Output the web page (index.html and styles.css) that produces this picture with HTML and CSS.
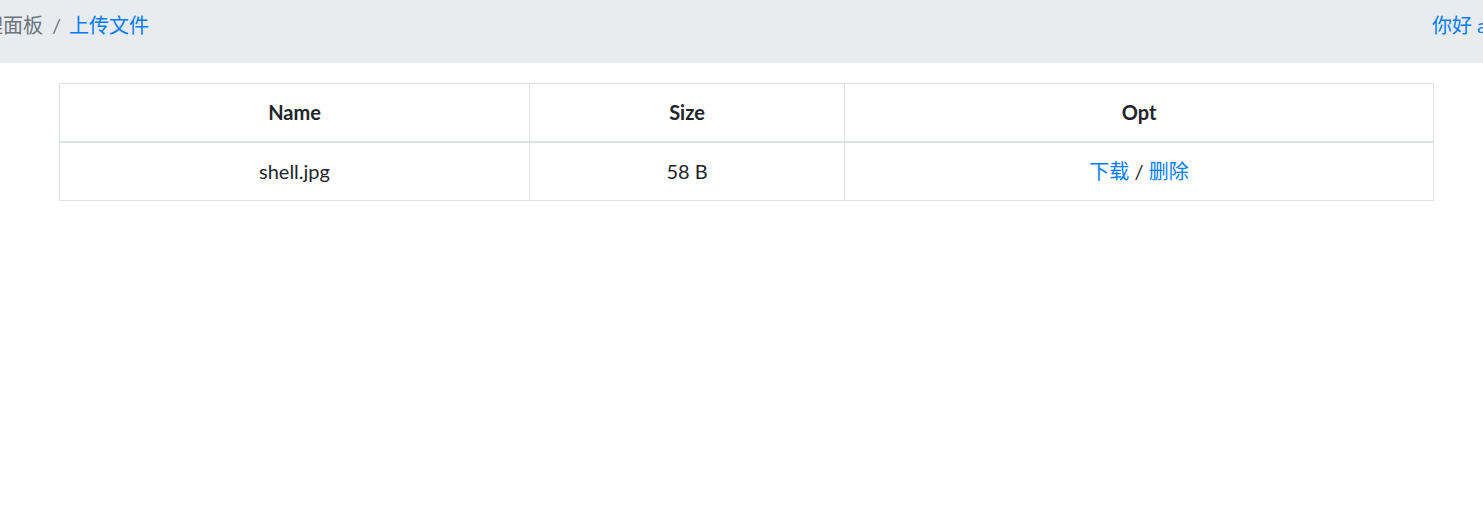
FILE: index.html
```html
<!DOCTYPE html>
<html lang="zh-CN">
<head>
<meta charset="utf-8">
<title>上传文件</title>
<link rel="stylesheet" href="styles.css">
</head>
<body>
<nav class="topbar">
  <ol class="crumbs">
    <li class="crumb active">管理面板</li>
    <li class="sep">/</li>
    <li class="crumb"><a href="#">上传文件</a></li>
  </ol>
  <div class="greet"><a href="#">你好 admin</a></div>
</nav>
<main class="content">
  <table class="files">
    <colgroup>
      <col class="c-name">
      <col class="c-size">
      <col class="c-opt">
    </colgroup>
    <thead>
      <tr><th>Name</th><th>Size</th><th>Opt</th></tr>
    </thead>
    <tbody>
      <tr>
        <td>shell.jpg</td>
        <td>58 B</td>
        <td><a href="#">下载</a> / <a href="#">删除</a></td>
      </tr>
    </tbody>
  </table>
</main>
</body>
</html>
```

FILE: styles.css
```css
html, body {
  margin: 0;
  padding: 0;
  overflow: hidden;
}
body {
  font-family: "Lato", "Noto Sans CJK SC", sans-serif;
  font-size: 20px;
  line-height: 30px;
  color: #212529;
  background: #fff;
}
a {
  color: #007bff;
  text-decoration: none;
}
.topbar {
  display: flex;
  justify-content: space-between;
  align-items: flex-start;
  height: 63px;
  box-sizing: border-box;
  padding-top: 10px;
  background: #e9ecef;
}
.crumbs {
  display: flex;
  list-style: none;
  margin: 0 0 0 -37px;
  padding: 0;
  white-space: nowrap;
}
.crumb.active {
  color: #6c757d;
}
.sep {
  color: #6c757d;
  padding: 0 8px 0 9px;
}
.greet {
  width: 51px;
  white-space: nowrap;
  flex-shrink: 0;
}
.content {
  padding: 20px 0 0 59px;
}
.files {
  width: 1374px;
  border-collapse: collapse;
  table-layout: fixed;
}
.c-name { width: 470px; }
.c-size { width: 315px; }
.c-opt { width: 589px; }
.files th,
.files td {
  border: 1px solid #dee2e6;
  padding: 13px 12px 14px;
  line-height: 30px;
  text-align: center;
}
.files th {
  font-weight: 700;
  border-bottom-width: 2px;
}
```
